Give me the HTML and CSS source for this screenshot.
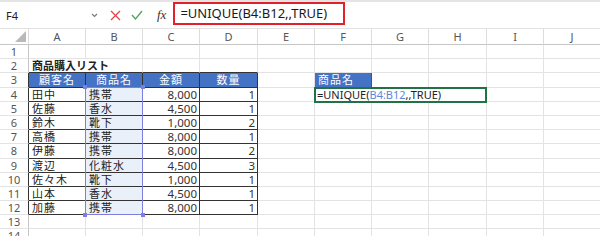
FILE: index.html
```html
<!DOCTYPE html>
<html lang="ja">
  <head>
    <meta charset="UTF-8" />
    <meta name="viewport" content="width=device-width, initial-scale=1.0" />
    <title>UNIQUE</title>
    <link rel="stylesheet" href="styles.css">
  </head>
  <body class="body">
    <div class="bar">
      <div class="namebox">
        <span>F4</span>
        <svg class="drop" width="7" height="5" viewBox="0 0 7 5"><polyline points="1,1 3.5,3.5 6,1" fill="none" stroke="#777" stroke-width="1.1"/></svg>
      </div>
      <div class="btns">
        <svg width="11" height="11" viewBox="0 0 11 11"><path d="M1 1 L10 10 M10 1 L1 10" stroke="#e0464a" stroke-width="1.3" fill="none"/></svg>
        <svg width="12" height="10" viewBox="0 0 12 10"><polyline points="1,5 4.5,9 11,1" fill="none" stroke="#4fa35a" stroke-width="1.3"/></svg>
        <span class="fx">fx</span>
      </div>
      <div class="frame">=UNIQUE(B4:B12,,TRUE)</div>
    </div>

    <div class="sheet">
      <div class="grid">
        <div class="ch corner"><svg width="11" height="11" viewBox="0 0 11 11"><polygon points="11,0 11,11 0,11" fill="#b9b9b9"/></svg></div>
        <div class="ch">A</div><div class="ch">B</div><div class="ch">C</div><div class="ch">D</div><div class="ch">E</div>
        <div class="ch">F</div><div class="ch">G</div><div class="ch">H</div><div class="ch">I</div><div class="ch">J</div>

        <div class="rh">1</div><div class="c"></div><div class="c"></div><div class="c"></div><div class="c"></div><div class="c"></div><div class="c"></div><div class="c"></div><div class="c"></div><div class="c"></div><div class="c"></div>

        <div class="rh">2</div><div class="c title top">商品購入リスト</div><div class="c top"></div><div class="c top"></div><div class="c top"></div><div class="c"></div><div class="c"></div><div class="c"></div><div class="c"></div><div class="c"></div><div class="c"></div>

        <div class="rh edge">3</div><div class="c tb th">顧客名</div><div class="c tb th">商品名</div><div class="c tb th">金額</div><div class="c tb th">数量</div><div class="c"></div><div class="c th th2">商品名</div><div class="c"></div><div class="c"></div><div class="c"></div><div class="c"></div>

        <div class="rh edge">4</div><div class="c tb jp">田中</div><div class="c tb jp pick">携帯</div><div class="c tb num">8,000</div><div class="c tb num">1</div><div class="c"></div><div class="c"></div><div class="c"></div><div class="c"></div><div class="c"></div><div class="c"></div>
        <div class="rh edge">5</div><div class="c tb jp">佐藤</div><div class="c tb jp pick">香水</div><div class="c tb num">4,500</div><div class="c tb num">1</div><div class="c"></div><div class="c"></div><div class="c"></div><div class="c"></div><div class="c"></div><div class="c"></div>
        <div class="rh edge">6</div><div class="c tb jp">鈴木</div><div class="c tb jp pick">靴下</div><div class="c tb num">1,000</div><div class="c tb num">2</div><div class="c"></div><div class="c"></div><div class="c"></div><div class="c"></div><div class="c"></div><div class="c"></div>
        <div class="rh edge">7</div><div class="c tb jp">高橋</div><div class="c tb jp pick">携帯</div><div class="c tb num">8,000</div><div class="c tb num">1</div><div class="c"></div><div class="c"></div><div class="c"></div><div class="c"></div><div class="c"></div><div class="c"></div>
        <div class="rh edge">8</div><div class="c tb jp">伊藤</div><div class="c tb jp pick">携帯</div><div class="c tb num">8,000</div><div class="c tb num">2</div><div class="c"></div><div class="c"></div><div class="c"></div><div class="c"></div><div class="c"></div><div class="c"></div>
        <div class="rh edge">9</div><div class="c tb jp">渡辺</div><div class="c tb jp pick">化粧水</div><div class="c tb num">4,500</div><div class="c tb num">3</div><div class="c"></div><div class="c"></div><div class="c"></div><div class="c"></div><div class="c"></div><div class="c"></div>
        <div class="rh edge">10</div><div class="c tb jp">佐々木</div><div class="c tb jp pick">靴下</div><div class="c tb num">1,000</div><div class="c tb num">1</div><div class="c"></div><div class="c"></div><div class="c"></div><div class="c"></div><div class="c"></div><div class="c"></div>
        <div class="rh edge">11</div><div class="c tb jp">山本</div><div class="c tb jp pick">香水</div><div class="c tb num">4,500</div><div class="c tb num">1</div><div class="c"></div><div class="c"></div><div class="c"></div><div class="c"></div><div class="c"></div><div class="c"></div>
        <div class="rh edge">12</div><div class="c tb jp">加藤</div><div class="c tb jp pick">携帯</div><div class="c tb num">8,000</div><div class="c tb num">1</div><div class="c"></div><div class="c"></div><div class="c"></div><div class="c"></div><div class="c"></div><div class="c"></div>

        <div class="rh">13</div><div class="c"></div><div class="c"></div><div class="c"></div><div class="c"></div><div class="c"></div><div class="c"></div><div class="c"></div><div class="c"></div><div class="c"></div><div class="c"></div>
        <div class="rh">14</div><div class="c"></div><div class="c"></div><div class="c"></div><div class="c"></div><div class="c"></div><div class="c"></div><div class="c"></div><div class="c"></div><div class="c"></div><div class="c"></div>
      </div>

      <div class="marks">
        <div class="range">
          <span class="dot tl"></span><span class="dot tr"></span>
          <span class="dot bl"></span><span class="dot br"></span>
        </div>
        <div class="edit">=UNIQUE(<span class="ref">B4:B12</span>,,TRUE)</div>
      </div>
    </div>
  </body>
</html>
```

FILE: styles.css
```css
.body {
  margin: 0;
  width: 600px;
  height: 236px;
  overflow: hidden;
  background-color: #ffffff;
  font-family: "Noto Sans CJK JP", "Noto Sans", sans-serif;
  color: #222;
}

/* formula bar */
.bar {
  box-sizing: border-box;
  height: 29px;
  display: flex;
  align-items: center;
  border-top: 2px solid #e4e4e4;
  border-bottom: 1px solid #e2e2e2;
}
.namebox {
  box-sizing: border-box;
  margin-left: 3px;
  width: 97px;
  height: 16px;
  padding: 0 2px 0 3px;
  display: flex;
  align-items: center;
  justify-content: space-between;
  font-family: "Noto Sans", sans-serif;
  font-size: 11px;
}
.btns {
  display: flex;
  align-items: center;
  margin-left: 10px;
  gap: 10px;
}
.fx {
  margin-left: 4px;
  font-family: "Liberation Serif", serif;
  font-style: italic;
  font-size: 13px;
  color: #333;
}
.frame {
  box-sizing: border-box;
  margin-left: 7px;
  margin-top: -3px;
  width: 172px;
  height: 23px;
  padding-left: 5px;
  border: 2px solid #e3212b;
  font-family: "Noto Sans", sans-serif;
  font-size: 13px;
  line-height: 19px;
  color: #1a1a1a;
}

/* sheet */
.sheet {
  position: relative;
}
.grid,
.marks {
  display: grid;
  grid-template-columns: 29px 57px 57px 57px 58px 57px 57px 57px 58px 57px 57px;
  grid-template-rows: 16px;
  grid-auto-rows: 14.2px;
}
.marks {
  position: absolute;
  top: 0;
  left: 0;
  right: 0;
  bottom: 0;
  pointer-events: none;
}

.ch {
  box-sizing: border-box;
  border-right: 1px solid #dcdcdc;
  border-bottom: 1px solid #c6c6c6;
  text-align: center;
  font-family: "Noto Sans", sans-serif;
  font-size: 11px;
  line-height: 15px;
  color: #555;
}
.corner {
  display: flex;
  justify-content: flex-end;
  align-items: flex-end;
  padding: 0 2px 2px 0;
}
.rh {
  box-sizing: border-box;
  border-right: 1px solid #c6c6c6;
  border-bottom: 1px solid #e3e3e3;
  text-align: center;
  font-family: "Noto Sans", sans-serif;
  font-size: 11px;
  line-height: 13px;
  color: #555;
  overflow: hidden;
}
.edge {
  border-right-color: #333;
}

.c {
  box-sizing: border-box;
  border-right: 1px solid #e3e3e3;
  border-bottom: 1px solid #e3e3e3;
  padding: 0 3px;
  font-size: 11px;
  line-height: 13px;
  white-space: nowrap;
}
.title {
  border-right: none;
  padding-left: 3px;
  font-weight: 700;
}
.top {
  border-bottom-color: #333;
}
.tb {
  border-right-color: #333;
  border-bottom-color: #333;
}
.th {
  background-color: #4472c4;
  color: #ffffff;
  text-align: center;
  letter-spacing: 1px;
}
.th2 {
  text-align: left;
  border-right-color: #30539a;
  border-bottom-color: #30539a;
}
.jp {
  letter-spacing: 1px;
}
.num {
  text-align: right;
  padding-right: 2px;
  font-family: "Noto Sans", sans-serif;
  font-size: 11.5px;
  color: #333;
}
.pick {
  background-color: #eaf0fa;
}

/* reference range and editing cell */
.range {
  position: relative;
  grid-column: 3;
  grid-row: 5 / 14;
  margin: -1px 0 0 -1px;
  border: 1px solid #7e7ee0;
}
.dot {
  position: absolute;
  width: 4px;
  height: 4px;
  background-color: #7e7ee0;
}
.tl { left: -3px; top: -3px; }
.tr { right: -3px; top: -3px; }
.bl { left: -3px; bottom: -3px; }
.br { right: -3px; bottom: -3px; }

.edit {
  grid-column: 7 / 10;
  grid-row: 5;
  margin: -1px 0 -1px -1px;
  padding-left: 1px;
  border: 2px solid #217346;
  background-color: #ffffff;
  font-family: "Noto Sans", sans-serif;
  font-size: 11px;
  line-height: 11px;
  color: #222;
  overflow: hidden;
}
.ref {
  color: #5f86dc;
}
```
